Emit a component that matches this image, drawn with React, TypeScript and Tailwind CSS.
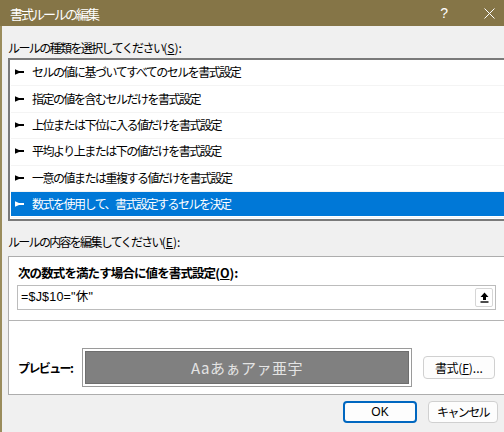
import React from 'react'

const RULES = [
  'セルの値に基づいてすべてのセルを書式設定',
  '指定の値を含むセルだけを書式設定',
  '上位または下位に入る値だけを書式設定',
  '平均より上または下の値だけを書式設定',
  '一意の値または重複する値だけを書式設定',
  '数式を使用して、書式設定するセルを決定',
]

const SELECTED = 5

function Bullet({ color }: { color: string }) {
  return (
    <svg width="9" height="6" viewBox="0 0 9 6" className="shrink-0">
      <path d="M0 0.3 L0 5.7 L4 4 L9 4 L9 2 L4 2 Z" fill={color} />
    </svg>
  )
}

function Key({ k }: { k: string }) {
  return (
    <span className="tracking-normal">
      (<span className="underline">{k}</span>):
    </span>
  )
}

export default function App() {
  return (
    <div className="w-[504px] h-[432px] overflow-hidden bg-[#f0f0f0] flex flex-col font-['Noto_Sans_CJK_JP',sans-serif] text-black">
      {/* Title bar */}
      <div className="h-[26px] shrink-0 bg-[#857547] flex items-center pl-[10px] text-white">
        <span className="text-[13px] tracking-[-2px] leading-none">書式ルールの編集</span>
        <span className="ml-auto mr-[36px] text-[14px] leading-none font-['Liberation_Sans',sans-serif]">?</span>
        <svg width="11" height="11" viewBox="0 0 11 11" className="mr-[9px]">
          <path d="M0.5 0.5 L10.5 10.5 M10.5 0.5 L0.5 10.5" stroke="white" strokeWidth="1" />
        </svg>
      </div>

      {/* Body */}
      <div className="flex-1 flex flex-col border-l-2 border-[#9a8c5c] w-[530px] pl-[6px]">
        <div className="mt-[14px] h-[16px] flex items-center text-[12px] tracking-[-1.6px] leading-none">
          ルールの種類を選択してください<Key k="S" />
        </div>

        {/* Rule list */}
        <div className="mt-[2px] h-[163px] border-2 border-[#7a7a7a] bg-white pl-[1px] flex flex-col">
          {RULES.map((r, i) => {
            const sel = i === SELECTED
            return (
              <div key={i} className="h-[26.4px] border-b border-[#f4f4f4] flex pb-[1px]">
                <div className={`flex-1 flex items-center pl-[4px] gap-[8px] ${sel ? 'bg-[#0078d7] text-white' : ''}`}>
                  <Bullet color={sel ? '#ffffff' : '#000000'} />
                  <span className="text-[12px] tracking-[-1.5px] leading-none">{r}</span>
                </div>
              </div>
            )
          })}
        </div>

        <div className="mt-[13px] h-[16px] flex items-center text-[12px] tracking-[-1.7px] leading-none">
          ルールの内容を編集してください<Key k="E" />
        </div>

        {/* Rule edit panel */}
        <div className="mt-[6px] h-[139px] border border-[#adadad] bg-white flex flex-col">
          <div className="mt-[8px] ml-[9px] h-[16px] flex items-center text-[12.5px] font-bold tracking-[-0.9px] leading-none">
            次の数式を満たす場合に値を書式設定<Key k="O" />
          </div>
          <div className="mt-[4px] ml-[8px] w-[479px] h-[25px] border border-[#bcbcbc] flex items-center pl-[3px] pr-[2px]">
            <span className="text-[12.5px] leading-none font-['Liberation_Sans','Noto_Sans_CJK_JP',sans-serif] tracking-[0.2px]">
              =$J$10="休"
            </span>
            <div className="ml-auto w-[18px] h-[19px] border border-[#d6d6d6] rounded-[2px] flex items-center justify-center">
              <svg width="9" height="11" viewBox="0 0 9 11">
                <path d="M4.5 0.5 L8.5 5 L6 5 L6 8 L3 8 L3 5 L0.5 5 Z" fill="#000" />
                <rect x="0.5" y="9.3" width="8" height="1.4" fill="#000" />
              </svg>
            </div>
          </div>
          <div className="mt-[10px] h-px bg-[#b4b4b4]" />
          <div className="mt-[27px] flex items-start">
            <div className="ml-[9px] w-[64px] h-[39px] flex items-center text-[12px] font-bold tracking-[-1.6px] leading-none">
              プレビュー:
            </div>
            <div className="w-[330px] h-[39px] border border-[#9a9a9a] p-[2px] bg-white">
              <div className="w-full h-full bg-[#808080] border border-[#6e6e6e] flex items-center justify-center">
                <span className="text-[15px] text-[#e4e4e4] leading-none tracking-[0.5px]">Aaあぁアァ亜宇</span>
              </div>
            </div>
            <div className="ml-[11px] mt-[8px] w-[72px] h-[23px] border border-[#d0d0d0] rounded-[4px] bg-[#fdfdfd] flex items-center justify-center text-[12px] leading-none">
              <span className="tracking-[-0.5px]">書式</span>
              <span>(<span className="underline">F</span>)...</span>
            </div>
          </div>
        </div>

        {/* Footer buttons */}
        <div className="mt-[6px] flex">
          <div className="ml-[335px] w-[74px] h-[22px] border-2 border-[#0067c0] rounded-[4px] bg-[#fdfdfd] flex items-center justify-center text-[12px] leading-none font-['Liberation_Sans',sans-serif]">
            OK
          </div>
          <div className="ml-[11px] w-[70px] h-[22px] border border-[#d0d0d0] rounded-[4px] bg-[#fdfdfd] flex items-center justify-center text-[12px] tracking-[-1.6px] leading-none">
            キャンセル
          </div>
        </div>
      </div>
    </div>
  )
}
